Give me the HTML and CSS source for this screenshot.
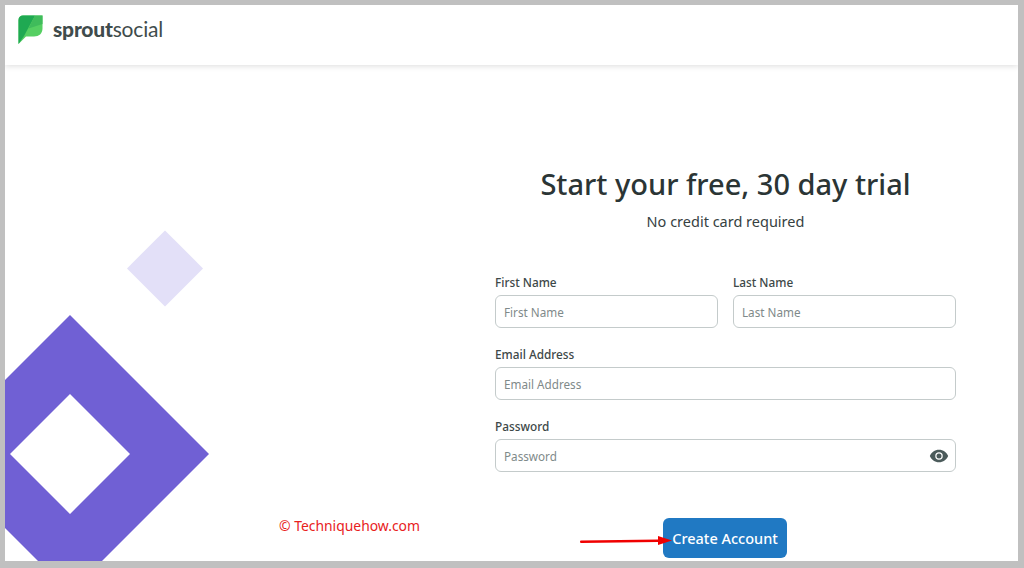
FILE: index.html
```html
<!DOCTYPE html>
<html lang="en">
<head>
<meta charset="utf-8">
<title>Sprout Social</title>
<link rel="stylesheet" href="styles.css">
</head>
<body>
<div class="frame">
  <header class="topbar">
    <svg class="leaf" viewBox="0 0.500 25 30" width="25" height="30">
      <path d="M5 1H24.500V14C24.500 19 21 22 16 22H8L0.500 29.500V5.500C0.500 2.500 2.500 1 5 1Z" fill="#55cf62"/>
      <path d="M5 1H17L6 21.500L0.500 29.500V5.500C0.500 2.500 2.500 1 5 1Z" fill="#1fa952"/>
      <path d="M17 1H24.500V9.500L10.500 14Z" fill="#3fbc5b"/>
    </svg>
    <span class="brand"><b>sprout</b>social</span>
  </header>
  <main class="content">
    <svg class="shapes" viewBox="0 0 210 340" width="210" height="340">
      <path d="M160 0.400L198 38.400L160 76.400L122 38.400Z" fill="#e3e0f8"/>
      <path d="M65 85L204 224L65 363L-74 224Z M65 164L5 224L65 284L125 224Z" fill="#7060d4" fill-rule="evenodd"/>
    </svg>
    <section class="panel">
      <h1>Start your free, 30 day trial</h1>
      <p class="sub">No credit card required</p>
      <form class="form">
        <div class="row">
          <label class="field"><span>First Name</span><input placeholder="First Name"></label>
          <label class="field"><span>Last Name</span><input placeholder="Last Name"></label>
        </div>
        <label class="field"><span>Email Address</span><input placeholder="Email Address"></label>
        <label class="field pw"><span>Password</span><input placeholder="Password">
          <svg class="eye" viewBox="0 0 24 24" width="20" height="20"><path fill-rule="evenodd" d="M12 4.500C7 4.500 2.700 7.600 1 12c1.700 4.400 6 7.500 11 7.500s9.300-3.100 11-7.500c-1.700-4.400-6-7.500-11-7.500Zm0 12a4.500 4.500 0 1 1 0-9 4.500 4.500 0 0 1 0 9Zm0-7.500a3 3 0 1 0 0 6 3 3 0 0 0 0-6Z" fill="#4b5b5b"/></svg>
        </label>
        <button class="submit" type="button">Create Account</button>
      </form>
    </section>
    <span class="watermark">© Techniquehow.com</span>
    <svg class="arrow" viewBox="0 0 92 14" width="92" height="14">
      <path d="M0 7.500Q0 6.500 1 6.500L78 5.500V2L92 6.500L78 11V8L1 9Q0 9 0 7.500Z" fill="#f00000"/>
    </svg>
  </main>
</div>
</body>
</html>
```
FILE: styles.css
```css
* { box-sizing: border-box; }
html, body { margin: 0; height: 100%; }
body { background: #c0c0c0; overflow: hidden; font-family: "Noto Sans", sans-serif; color: #364141; }
.frame { margin: 5px 6px 0 5px; height: 556px; background: #fff; display: flex; flex-direction: column; overflow: hidden; position: relative; }
.topbar { height: 60px; flex: none; display: flex; align-items: center; gap: 10px; padding: 0 0 10px 13px; box-shadow: 0 1px 6px rgba(0,0,0,.14); background: #fff; position: relative; }
.leaf { flex: none; }
.brand { font-family: "Lato", sans-serif; font-size: 21px; font-weight: 400; color: #3f4c4c; letter-spacing: -.2px; margin-bottom: 3px; }
.brand b { font-weight: 900; }
.content { flex: 1; position: relative; display: flex; justify-content: flex-end; padding-right: 62px; }
.shapes { position: absolute; left: 0; top: 165px; }
.panel { width: 461px; display: flex; flex-direction: column; align-items: stretch; padding-top: 99px; }
h1 { margin: 0; font-size: 29px; line-height: 40px; font-weight: 500; color: #2b3535; text-align: center; }
.sub { margin: 7px 0 0; font-size: 14.500px; line-height: 20px; text-align: center; color: #364141; }
.form { margin-top: 43px; display: flex; flex-direction: column; gap: 18.200px; }
.row { display: flex; gap: 15px; }
.row .field { flex: 1; }
.field { display: flex; flex-direction: column; gap: 5px; position: relative; }
.field span { font-size: 11.800px; line-height: 16px; font-weight: 500; color: #3d4848; }
input { height: 33px; width: 100%; border: 1px solid #c4cbcb; border-radius: 6px; padding: 0 8px; font: 11.700px "Noto Sans", sans-serif; color: #364141; background: #fff; outline: none; }
input::placeholder { color: #7f8a8a; opacity: 1; }
.eye { position: absolute; right: 7px; bottom: 6px; }
.submit { align-self: center; margin: 27.800px 1px 0 0; width: 124px; height: 40px; border: 0; border-radius: 6px; background: #2079c3; color: #fff; font: 500 14.500px "Noto Sans", sans-serif; padding: 0; }
.watermark { position: absolute; left: 274px; top: 452px; font-size: 13.900px; line-height: 18px; color: #e8211d; }
.arrow { position: absolute; left: 575px; top: 469px; }
```
